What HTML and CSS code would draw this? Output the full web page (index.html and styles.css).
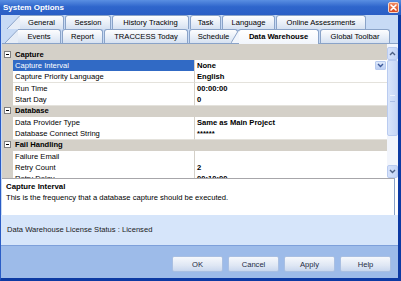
FILE: index.html
```html
<!DOCTYPE html>
<html>
<head>
<meta charset="utf-8" />
<title>System Options</title>
<link rel="stylesheet" href="styles.css">
</head>
<body>
<div id="wrap">

	<!-- 타이틀 -->
	<div class="titlebar">
		<span class="title">System Options</span>
		<span class="close"><svg width="9" height="9" viewBox="0 0 9 9"><path d="M2 2L7 7M7 2L2 7" stroke="#fff" stroke-width="1.6" stroke-linecap="round"/></svg></span>
	</div>

	<div class="frame">

		<!-- 탭 -->
		<div class="tabs">
			<div class="tabrow row1">
				<svg class="slant" width="13" height="14" viewBox="0 0 13 14"><polygon points="0,14 13,0 13,14" fill="#e6edf7"/><line x1="0" y1="14" x2="13" y2="0.5" stroke="#8aa3c8"/></svg>
				<span class="tab t_general">General</span>
				<span class="tab t_session">Session</span>
				<span class="tab t_history">History Tracking</span>
				<span class="tab t_task">Task</span>
				<span class="tab t_lang">Language</span>
				<span class="tab t_online">Online Assessments</span>
			</div>
			<div class="tabrow row2">
				<svg class="slant" width="13" height="14" viewBox="0 0 13 14"><polygon points="0,14 13,0 13,14" fill="#e6edf7"/><line x1="0" y1="14" x2="13" y2="0.5" stroke="#8aa3c8"/></svg>
				<span class="tab t_events">Events</span>
				<span class="tab t_report">Report</span>
				<span class="tab t_traccess">TRACCESS Today</span>
				<span class="tab t_schedule">Schedule</span>
				<span class="tab t_dw on"><svg class="onslant" width="8" height="14" viewBox="0 0 8 14"><polygon points="0,14 8,0 8,14" fill="#f1f5fc"/><line x1="0" y1="14" x2="8" y2="0.5" stroke="#8aa3c8"/></svg>Data Warehouse</span>
				<span class="tab t_global">Global Toolbar</span>
			</div>
		</div>

		<!-- 속성 그리드 -->
		<div class="panel">
			<div class="grid">
				<div class="rows">
					<div class="cat"><span class="box"></span><span>Capture</span></div>
					<div class="prop sel"><span class="name">Capture Interval</span><span class="val">None<span class="drop"><svg width="7" height="5" viewBox="0 0 7 5"><path d="M1 1L3.5 3.5L6 1" fill="none" stroke="#3d5a9a" stroke-width="1.4"/></svg></span></span></div>
					<div class="prop"><span class="name">Capture Priority Language</span><span class="val">English</span></div>
					<div class="prop"><span class="name">Run Time</span><span class="val">00:00:00</span></div>
					<div class="prop"><span class="name">Start Day</span><span class="val">0</span></div>
					<div class="cat"><span class="box"></span><span>Database</span></div>
					<div class="prop"><span class="name">Data Provider Type</span><span class="val">Same as Main Project</span></div>
					<div class="prop"><span class="name">Database Connect String</span><span class="val">******</span></div>
					<div class="cat"><span class="box"></span><span>Fail Handling</span></div>
					<div class="prop"><span class="name">Failure Email</span><span class="val"></span></div>
					<div class="prop"><span class="name">Retry Count</span><span class="val">2</span></div>
					<div class="prop"><span class="name">Retry Delay</span><span class="val">00:10:00</span></div>
				</div>
				<div class="scroll">
					<span class="sbtn"><svg width="7" height="5" viewBox="0 0 7 5"><path d="M1 4L3.5 1.5L6 4" fill="none" stroke="#4d6185" stroke-width="1.4"/></svg></span>
					<span class="thumb"><span class="grip"></span></span>
					<span class="track"></span>
					<span class="sbtn"><svg width="7" height="5" viewBox="0 0 7 5"><path d="M1 1L3.5 3.5L6 1" fill="none" stroke="#4d6185" stroke-width="1.4"/></svg></span>
				</div>
			</div>
			<div class="desc">
				<strong>Capture Interval</strong>
				<p>This is the frequency that a database capture should be executed.</p>
			</div>
		</div>

		<div class="status">Data Warehouse License Status : Licensed</div>

		<div class="buttons">
			<button>OK</button>
			<button>Cancel</button>
			<button>Apply</button>
			<button>Help</button>
		</div>
	</div>
</div>
</body>
</html>
```

FILE: styles.css
```css
	/** 공통 **/
	*{margin:0; padding:0; box-sizing:border-box;}
	body{
		width:401px;
		height:281px;
		overflow:hidden;
		font-family:"Liberation Sans", Arial, sans-serif;
		font-size:7.6px;
		color:#000;
		background:#fff;
	}
	#wrap{display:flex; flex-direction:column; width:401px; height:281px;}

	/* 타이틀 */
	.titlebar{
		display:flex;
		align-items:center;
		justify-content:space-between;
		height:15px;
		padding:0 2px 0 3px;
		background:linear-gradient(#5a8fe2, #2f66cc 45%, #2a5ec5);
	}
	.title{color:#fff; font-weight:bold; font-size:8px;}
	.close{
		display:flex;
		align-items:center;
		justify-content:center;
		width:11px;
		height:11px;
		border:1px solid #f6d8cc;
		border-radius:2px;
		background:linear-gradient(#f08a62, #d9481f);
	}

	.frame{
		display:flex;
		flex-direction:column;
		height:266px;
		background:#c7daf5;
		border-left:1px solid #2a5cc6;
		border-right:3px solid #0d3aa3;
		border-bottom:3px solid #0d3aa3;
	}

	/* 탭 */
	.tabs{height:28px;}
	.tabrow{display:flex; height:14px;}
	.row1{padding-left:6px;}
	.row2{padding-left:4px;}
	.slant{display:block; flex:none;}
	.tab{
		position:relative;
		flex:none;
		height:14px;
		border:1px solid #8aa3c8;
		border-bottom:0;
		border-radius:3px 3px 0 0;
		background:linear-gradient(#fdfdfe, #e6edf7 60%, #d6e1f1);
		text-align:center;
		line-height:13px;
		white-space:nowrap;
	}
	.tab + .tab{margin-left:1px;}
	.slant + .tab{border-left:0; border-top-left-radius:0;}
	.tab.on{
		z-index:1;
		height:15px;
		margin-left:0;
		font-weight:bold;
		background:linear-gradient(#ffffff, #f1f5fc);
	}
	.onslant{position:absolute; left:-8px; top:-1px;}

	.t_general{width:44px;}
	.t_session{width:46px;}
	.t_history{width:77px;}
	.t_task{width:31px;}
	.t_lang{width:53px;}
	.t_online{width:90px;}
	.t_events{width:43px;}
	.t_report{width:41px;}
	.t_traccess{width:84px;}
	.t_schedule{width:49px;}
	.t_dw{width:81px;}
	.t_global{width:70px;}

	/* 속성 그리드 */
	.panel{
		height:172px;
		margin-left:1px;
		border-top:1px solid #8aa3c8;
		background:#fff;
	}
	.grid{display:flex; height:134px; background:#d4d0c8;}
	.rows{flex:1; padding-top:4.6px; overflow:hidden;}
	.cat, .prop{
		display:grid;
		grid-template-columns:11px 181px 1fr;
		height:11.33px;
		line-height:11px;
		white-space:nowrap;
	}
	.cat{font-weight:bold;}
	.cat span:last-child{grid-column:2 / 4; padding-left:2px;}
	.box{
		align-self:center;
		justify-self:center;
		position:relative;
		width:7px;
		height:7px;
		border:1px solid #808080;
		background:#fff;
	}
	.box:after{content:""; position:absolute; left:1px; top:2px; width:3px; height:1px; background:#000;}
	.prop .name{grid-column:2; padding-left:2px; background:#fff; border-bottom:1px solid #e4e2dc;}
	.prop .val{
		display:flex;
		align-items:center;
		justify-content:space-between;
		padding:0 1px 0 2px;
		font-weight:bold;
		background:#fff;
		border-left:1px solid #d4d0c8;
		border-bottom:1px solid #e4e2dc;
	}
	.sel .name{background:#316ac5; color:#fff;}
	.drop{
		display:flex;
		align-items:center;
		justify-content:center;
		width:11px;
		height:9px;
		border:1px solid #b8cbef;
		border-radius:1px;
		background:linear-gradient(#dde8fb, #bccff3);
	}

	/* 스크롤 */
	.scroll{display:flex; flex-direction:column; width:11px; padding-top:3px; background:#f2f5fc;}
	.sbtn{
		display:flex;
		align-items:center;
		justify-content:center;
		height:13px;
		border:1px solid #b9cbf0;
		border-radius:2px;
		background:linear-gradient(90deg, #d6e2fb, #c3d4f6);
	}
	.thumb{
		display:flex;
		align-items:center;
		justify-content:center;
		height:76px;
		border:1px solid #b9cbf0;
		border-radius:2px;
		background:linear-gradient(90deg, #d9e5fb, #c6d6f6);
	}
	.grip{width:5px; height:7px; border-top:1px solid #eef3fd; border-bottom:1px solid #a9bde6;}
	.track{flex:1;}

	.desc{
		height:38px;
		margin-right:3px;
		padding:2px 4px 0 4px;
		border-top:1px solid #a7a6aa;
		border-right:1px solid #8aa3c8;
		line-height:11px;
	}
	.desc strong{display:block; font-size:7.8px;}

	/* 하단 */
	.status{
		height:30px;
		padding:0 6px;
		line-height:30px;
		background:#d6e5fa;
		color:#1a1a1a;
	}
	.buttons{
		display:flex;
		justify-content:flex-end;
		gap:5px;
		height:33px;
		padding:10px 7px 0 0;
		border-top:1px solid #7ea0da;
		background:#9dbbe9;
	}
	.buttons button{
		width:51px;
		height:16px;
		border:1px solid #a9bfe2;
		border-radius:2px;
		background:linear-gradient(#f6f8fc, #dfe7f4 60%, #c9d7ee);
		font-family:"Liberation Sans", Arial, sans-serif;
		font-size:7.6px;
		color:#1e2a44;
	}
```
